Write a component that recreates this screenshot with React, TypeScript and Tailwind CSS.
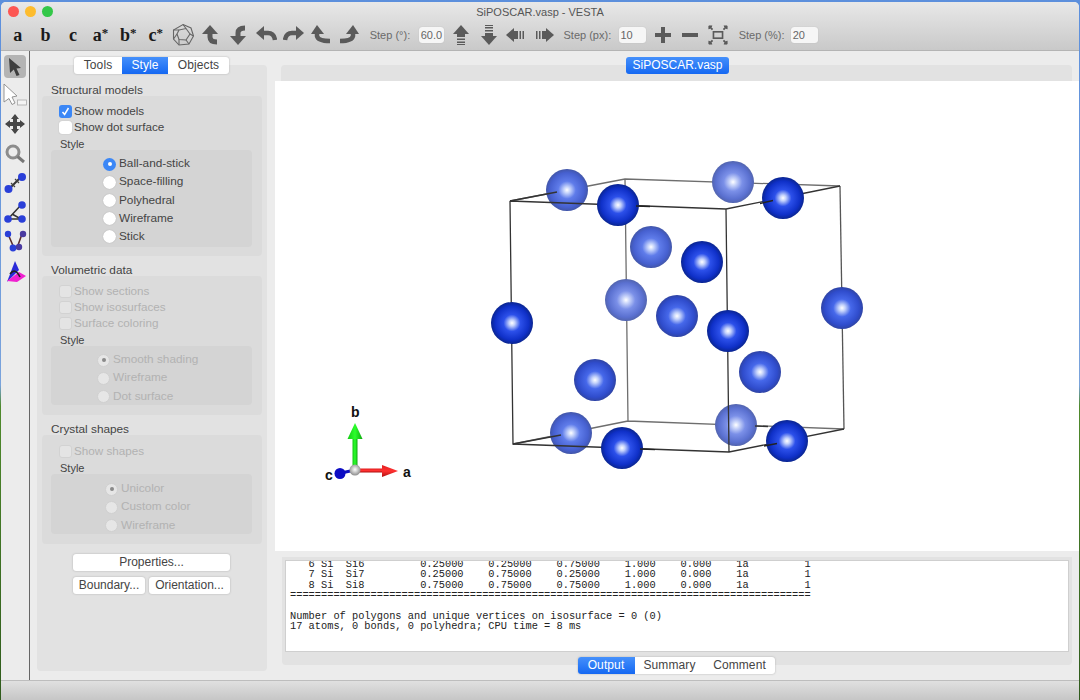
import React from 'react';

const uiFont = "font-['Liberation_Sans',Arial,sans-serif]";

// --- toolbar icons ---
const G = '#5a5a5a';

function CurveArrow({ flip = '' }: { flip?: string }) {
  return (
    <svg width="22" height="22" viewBox="0 0 22 22" className={flip}>
      <path d="M10 1 L18 10 L2 10 Z" fill={G} />
      <path d="M10 9 V13 Q10 18 17 18" fill="none" stroke={G} strokeWidth="5" />
    </svg>
  );
}

function SideArrow({ flip = '' }: { flip?: string }) {
  return (
    <svg width="22" height="22" viewBox="0 0 22 22" className={flip}>
      <path d="M1 9 L9 2 L9 16 Z" fill={G} />
      <path d="M8 9 H13 Q19 9 20 16" fill="none" stroke={G} strokeWidth="4.5" />
    </svg>
  );
}

function HookArrow({ flip = '' }: { flip?: string }) {
  return (
    <svg width="22" height="22" viewBox="0 0 22 22" className={flip}>
      <path d="M7 1 L14 10 L1 10 Z" fill={G} />
      <path d="M7 9 V12 Q8 17 20 17" fill="none" stroke={G} strokeWidth="4.5" />
    </svg>
  );
}

function Poly() {
  return (
    <svg width="24" height="24" viewBox="0 0 24 24" fill="none" stroke="#666" strokeWidth="1.1">
      <path d="M12 1.5 L20 5 L22.5 13 L18 21 L8 22 L2.5 16 L2.5 7 Z" />
      <path d="M8 7 L15 5.5 L19 11 L15 17 L8 16.5 L6 11 Z" />
      <path d="M8 7 L2.5 7 M15 5.5 L12 1.5 M19 11 L22.5 13 M15 17 L18 21 M8 16.5 L8 22 M6 11 L2.5 16" />
    </svg>
  );
}

function PushUp({ flip = '' }: { flip?: string }) {
  return (
    <svg width="20" height="22" viewBox="0 0 20 22" className={flip}>
      <path d="M10 1 L18 10 L2 10 Z" fill={G} />
      <path d="M6 10 H14 V13 H6 Z M6 14.5 H14 V16 H6 Z M6 17.5 H14 V19 H6 Z M6 20 H14 V21 H6 Z" fill={G} />
    </svg>
  );
}

function PushLeft({ flip = '' }: { flip?: string }) {
  return (
    <svg width="22" height="16" viewBox="0 0 22 16" className={flip}>
      <path d="M1 8 L9 1 L9 15 Z" fill={G} />
      <path d="M9 4 H13 V12 H9 Z M14.5 4 H16 V12 H14.5 Z M17.5 4 H19 V12 H17.5 Z" fill={G} />
    </svg>
  );
}

function Fit() {
  return (
    <svg width="20" height="20" viewBox="0 0 22 22" fill="none" stroke={G}>
      <rect x="6" y="7.5" width="10" height="7" strokeWidth="1.8" />
      <path d="M1.5 1.5 L5 5 M20.5 1.5 L17 5 M1.5 20.5 L5 17 M20.5 20.5 L17 17" strokeWidth="2" />
      <path d="M1 1 H4.5 L1 4.5 Z M21 1 H17.5 L21 4.5 Z M1 21 H4.5 L1 17.5 Z M21 21 H17.5 L21 17.5 Z" fill={G} strokeWidth="1" />
    </svg>
  );
}

function Letter({ t, sup }: { t: string; sup?: boolean }) {
  return (
    <span className="w-[27.6px] shrink-0 text-center font-['Liberation_Serif',serif] font-bold text-[18px] leading-none text-[#1a1a1a]">
      {t}
      {sup && <span className="text-[13px] relative top-[-4px]">*</span>}
    </span>
  );
}

function Cell({ children, w = 'w-[27.6px]' }: { children: React.ReactNode; w?: string }) {
  return <span className={`${w} shrink-0 flex items-center justify-center`}>{children}</span>;
}

function StepBox({ label, value, className, labelW, boxW }: { label: string; value: string; className: string; labelW: string; boxW: string }) {
  return (
    <div className={`flex items-center shrink-0 gap-[10px] ${className}`}>
      <span className={`${labelW} text-[11px] text-[#6a6a6a] whitespace-nowrap`}>{label}</span>
      <span className={`${boxW} h-[16px] bg-[#f6f6f6] rounded-[3px] shadow-[0_0_1px_#aaa] text-[11px] leading-[16px] text-[#666] px-[2px]`}>
        {value}
      </span>
    </div>
  );
}

// --- left tool strip ---
function ToolIcons() {
  const blue = '#2a3fd8';
  return (
    <div className="flex flex-col items-center">
      <span className="w-[22px] h-[23px] rounded-[4px] bg-[#b4b4b4] flex items-center justify-center mt-[4px]">
        <svg width="16" height="20" viewBox="0 0 16 20">
          <path d="M2 1 L14 11 L9.5 11.5 L12.5 18 L9.5 19 L6.8 12.6 L3 16 Z" fill="#3d3d3d" />
        </svg>
      </span>
      <svg width="24" height="24" viewBox="0 0 24 24" className="mt-[5px]">
        <path d="M1 1 L14 13 L9 14 L12 20 L9 21.5 L6 15.5 L1 19 Z" fill="#fff" stroke="#8a8a8a" strokeWidth="0.9" />
        <rect x="14.5" y="17" width="9" height="5" fill="#f4f4f4" stroke="#aaa" strokeWidth="0.8" />
      </svg>
      <svg width="22" height="22" viewBox="0 0 22 22" className="mt-[6px]">
        <path d="M11 1 L15 6 H13 V9 H16 V7 L21 11 L16 15 V13 H13 V16 H15 L11 21 L7 16 H9 V13 H6 V15 L1 11 L6 7 V9 H9 V6 H7 Z" fill="#474747" />
      </svg>
      <svg width="22" height="22" viewBox="0 0 22 22" className="mt-[8px]" fill="none">
        <circle cx="9" cy="9" r="6" stroke="#8c8c8c" strokeWidth="3" />
        <path d="M13.5 13.5 L20 19" stroke="#777" strokeWidth="3" />
      </svg>
      <svg width="24" height="24" viewBox="0 0 24 24" className="mt-[6px]">
        <path d="M7 17 L17 7" stroke="#333" strokeWidth="2" />
        <path d="M8 12 L12 16 M12 8 L16 12" stroke="#444" strokeWidth="1.2" />
        <circle cx="5.5" cy="18" r="4" fill={blue} />
        <circle cx="19" cy="6" r="4" fill={blue} />
      </svg>
      <svg width="24" height="24" viewBox="0 0 24 24" className="mt-[5px]" fill="none">
        <path d="M5 19 L18 5 M9 14 L18 19 H5" stroke="#333" strokeWidth="1.5" />
        <circle cx="5" cy="19" r="3.8" fill={blue} />
        <circle cx="19" cy="5" r="3.8" fill={blue} />
        <circle cx="19" cy="19" r="3.8" fill={blue} />
      </svg>
      <svg width="24" height="24" viewBox="0 0 24 24" className="mt-[5px]" fill="none">
        <path d="M5 5 L11 19 H14 L19 5" stroke="#5a2d2d" strokeWidth="1.6" />
        <circle cx="5" cy="5" r="3.2" fill={blue} />
        <circle cx="10" cy="19" r="3.4" fill={blue} />
        <circle cx="16" cy="18" r="3.2" fill="#4a3aa0" />
        <circle cx="20" cy="5" r="3.2" fill="#4a3aa0" />
      </svg>
      <svg width="24" height="24" viewBox="0 0 24 24" className="mt-[6px]" fill="none">
        <path d="M4 23 L12 2 L16 11 Z" fill="#2a2ad8" />
        <path d="M4 22 L16 13 L23 17 L14 23 Z" fill="#f020d0" />
        <path d="M7 15 Q12 8 17 18" stroke="#222" strokeWidth="1.6" />
      </svg>
    </div>
  );
}

// --- form bits ---
function Check({ label, checked, disabled }: { label: string; checked?: boolean; disabled?: boolean }) {
  return (
    <div className="h-[16px] flex items-center pl-[17px]">
      <span
        className={
          checked
            ? 'w-[13px] h-[13px] rounded-[3px] bg-[#3b87f6] flex items-center justify-center'
            : disabled
              ? 'w-[13px] h-[13px] rounded-[3px] bg-[#e4e4e4] border border-[#d2d2d2]'
              : 'w-[13px] h-[13px] rounded-[3px] bg-white shadow-[0_0_1px_#999]'
        }
      >
        {checked && (
          <svg width="11" height="11" viewBox="0 0 11 11" fill="none">
            <path d="M2.5 6 L4.6 8.5 L8.5 2" stroke="#fff" strokeWidth="1.5" />
          </svg>
        )}
      </span>
      <span className={`ml-[2px] text-[11.7px] ${disabled ? 'text-[#b2b2b2]' : 'text-[#444]'}`}>{label}</span>
    </div>
  );
}

function Radio({ label, on, disabled }: { label: string; on?: boolean; disabled?: boolean }) {
  let dot = 'w-[13px] h-[13px] rounded-full flex items-center justify-center ';
  if (disabled) dot += 'bg-[#e6e6e6] border border-[#d0d0d0]';
  else if (on) dot += 'bg-[#3b87f6]';
  else dot += 'bg-white shadow-[0_0_1px_#999]';
  return (
    <div className="h-[18.2px] flex items-center">
      <span className={dot}>{on && <span className={`w-[4px] h-[4px] rounded-full ${disabled ? 'bg-[#8a8a8a]' : 'bg-white'}`} />}</span>
      <span className={`ml-[3px] text-[11.8px] ${disabled ? 'text-[#b2b2b2]' : 'text-[#444]'}`}>{label}</span>
    </div>
  );
}

function Section({
  title,
  checks,
  radios,
  disabled,
  boxClass,
  innerClass,
}: {
  title: string;
  checks: { label: string; checked?: boolean }[];
  radios: { label: string; on?: boolean }[];
  disabled?: boolean;
  boxClass: string;
  innerClass: string;
}) {
  return (
    <div className="ml-[5px] w-[220px]">
      <div className="pl-[9px] h-[13px] text-[11.8px] leading-[14px] text-[#444]">{title}</div>
      <div className={`rounded-[4px] bg-[#dbdbdb] ${boxClass}`}>
        {checks.map((c) => (
          <Check key={c.label} label={c.label} checked={c.checked} disabled={disabled} />
        ))}
        <div className="mt-[3px] h-[12px] pl-[18px] text-[11px] leading-[12px] text-[#444]">Style</div>
        <div className={`ml-[9px] w-[201px] rounded-[4px] bg-[#d4d4d4] ${innerClass}`}>
          {radios.map((r) => (
            <Radio key={r.label} label={r.label} on={r.on} disabled={disabled} />
          ))}
        </div>
      </div>
    </div>
  );
}

function Segment({ items, active, widths }: { items: string[]; active: string; widths: string[] }) {
  return (
    <div className="flex h-[17px] rounded-[3px] bg-white shadow-[0_0_2px_#aaa] overflow-hidden">
      {items.map((it, i) => (
        <span
          key={it}
          className={`${widths[i]} text-center text-[12px] leading-[17px] tracking-[0.1px] ${
            it === active ? 'bg-[linear-gradient(#4590fb,#1568f2)] text-white' : 'text-[#444]'
          }`}
        >
          {it}
        </span>
      ))}
    </div>
  );
}

function Btn({ children, className }: { children: React.ReactNode; className: string }) {
  return (
    <span className={`block h-[17px] rounded-[3px] bg-white shadow-[0_0_2px_#aaa] text-center text-[12px] leading-[17px] text-[#444] ${className}`}>
      {children}
    </span>
  );
}

// --- structure view ---
// tone: 0 saturated, 1 light, 2 pale (further back)
const backAtoms: { x: number; y: number; t: number }[] = [
  { x: 733, y: 182, t: 2 },
  { x: 567, y: 190, t: 1 },
  { x: 651, y: 247, t: 1 },
  { x: 842, y: 308, t: 0 },
  { x: 626, y: 300, t: 2 },
  { x: 677, y: 316, t: 0 },
  { x: 595, y: 380, t: 0 },
  { x: 760, y: 372, t: 0 },
  { x: 571, y: 433, t: 1 },
  { x: 736, y: 425, t: 2 },
];

const frontAtoms = [
  { x: 618, y: 205 },
  { x: 783, y: 198 },
  { x: 702, y: 262 },
  { x: 512, y: 323 },
  { x: 728, y: 331 },
  { x: 622, y: 448 },
  { x: 787, y: 441 },
];

const toneFill = ['url(#sat)', 'url(#light)', 'url(#pale)'];

function Crystal() {
  return (
    <svg className="block w-full h-full" viewBox="275 81 804 470">
      <defs>
        <radialGradient id="front" cx="50%" cy="50%" r="50%">
          <stop offset="0%" stopColor="#ffffff" />
          <stop offset="14%" stopColor="#c4d2fc" />
          <stop offset="40%" stopColor="#2c50ea" />
          <stop offset="80%" stopColor="#0f30c8" />
          <stop offset="100%" stopColor="#0a2590" />
        </radialGradient>
        <radialGradient id="sat" cx="50%" cy="50%" r="50%">
          <stop offset="0%" stopColor="#ffffff" />
          <stop offset="15%" stopColor="#c6d4fb" />
          <stop offset="42%" stopColor="#4668ea" />
          <stop offset="82%" stopColor="#2f4ccc" />
          <stop offset="100%" stopColor="#2f44a4" />
        </radialGradient>
        <radialGradient id="light" cx="50%" cy="50%" r="50%">
          <stop offset="0%" stopColor="#ffffff" />
          <stop offset="15%" stopColor="#c6d4fb" />
          <stop offset="42%" stopColor="#5f7cea" />
          <stop offset="82%" stopColor="#4660d0" />
          <stop offset="100%" stopColor="#4256a8" />
        </radialGradient>
        <radialGradient id="pale" cx="50%" cy="50%" r="50%">
          <stop offset="0%" stopColor="#ffffff" />
          <stop offset="16%" stopColor="#cbd6fa" />
          <stop offset="44%" stopColor="#7b90e8" />
          <stop offset="82%" stopColor="#5a70d0" />
          <stop offset="100%" stopColor="#5264ae" />
        </radialGradient>
        <radialGradient id="knob" cx="50%" cy="45%" r="55%">
          <stop offset="0%" stopColor="#ffffff" />
          <stop offset="100%" stopColor="#8c8c8c" />
        </radialGradient>
        <linearGradient id="greenAxis" x1="0" x2="1" y1="0" y2="0">
          <stop offset="0%" stopColor="#14c814" />
          <stop offset="50%" stopColor="#2cff2c" />
          <stop offset="100%" stopColor="#0fa80f" />
        </linearGradient>
        <linearGradient id="redAxis" x1="0" x2="0" y1="0" y2="1">
          <stop offset="0%" stopColor="#e02020" />
          <stop offset="50%" stopColor="#ff3030" />
          <stop offset="100%" stopColor="#b01010" />
        </linearGradient>
      </defs>

      {/* cell edges behind the atoms */}
      <g stroke="#6e6e6e" strokeWidth="1.3" fill="none">
        <path d="M510 201 L625 179 L840 186 M625 179 L628 421 L844 429 M628 421 L513 444" />
        <path d="M840 186 L844 429" stroke="#555" />
      </g>
      {backAtoms.map((a) => (
        <circle key={`${a.x}-${a.y}`} cx={a.x} cy={a.y} r={21} fill={toneFill[a.t]} />
      ))}
      {/* edges in front of the paler atoms */}
      <g stroke="#333" strokeWidth="1.3" fill="none">
        <path d="M510 201 L726 209 L840 186 M844 429 L729 452 L513 444 L510 201 M726 209 L729 452" />
        <path d="M513 444 L561 435 M510 201 L557 192 M755 426 L768 426.5" />
      </g>
      {frontAtoms.map((a) => (
        <circle key={`${a.x}-${a.y}`} cx={a.x} cy={a.y} r={21} fill="url(#front)" />
      ))}
      <g stroke="#222" strokeWidth="1.3" fill="none">
        <path d="M760 203.5 L773 200.5 M764 446 L777 443.5 M640 449 L655 449.6 M636 206 L650 206.5" />
      </g>

      {/* axes */}
      <rect x="352.5" y="437" width="5" height="33" fill="url(#greenAxis)" />
      <path d="M355 423 L347.5 439 L362.5 439 Z" fill="url(#greenAxis)" />
      <rect x="355" y="468.5" width="28" height="4" fill="url(#redAxis)" />
      <path d="M398 471 L382 465 L382 477 Z" fill="url(#redAxis)" />
      <path d="M355 470 L341 473" stroke="#1010c0" strokeWidth="3" />
      <circle cx="340" cy="473.5" r="5.5" fill="#0c0cc4" />
      <circle cx="355" cy="470" r="5.5" fill="url(#knob)" />
      <g className="font-['Liberation_Sans',sans-serif]" fontWeight="700" fontSize="14" fill="#111">
        <text x="351" y="417">b</text>
        <text x="403" y="477">a</text>
        <text x="325" y="480">c</text>
      </g>
    </svg>
  );
}

const outputText = `   6 Si  Si6         0.25000    0.25000    0.75000    1.000    0.000    1a         1
   7 Si  Si7         0.25000    0.75000    0.25000    1.000    0.000    1a         1
   8 Si  Si8         0.75000    0.75000    0.75000    1.000    0.000    1a         1
====================================================================================

Number of polygons and unique vertices on isosurface = 0 (0)
17 atoms, 0 bonds, 0 polyhedra; CPU time = 8 ms`;

export default function App() {
  return (
    <div className={`${uiFont} w-[1080px] h-[700px] overflow-hidden px-[1px] pt-[2px] bg-[linear-gradient(#5c8fdc_0%,#7aa3dc_55%,#4f8a2c_58%,#2f5a1c_100%)]`}>
      <div className="h-[698px] flex flex-col rounded-t-[5px] overflow-hidden bg-[#ececec]">
        {/* title + toolbar */}
        <div className="h-[49px] shrink-0 bg-[linear-gradient(#e8e8e8,#c9c9c9)] border-b border-[#b4b4b4]">
          <div className="h-[18px] grid grid-cols-[1fr_auto_1fr] items-center px-[7px]">
            <div className="flex gap-[6px]">
              <span className="w-[11px] h-[11px] rounded-full bg-[#fc5753]" />
              <span className="w-[11px] h-[11px] rounded-full bg-[#fdbc2e]" />
              <span className="w-[11px] h-[11px] rounded-full bg-[#33c748]" />
            </div>
            <div className="text-[11px] text-[#555] mt-[2px]">SiPOSCAR.vasp - VESTA</div>
            <div />
          </div>
          <div className="flex items-center h-[30px] pl-[3px]">
            <Letter t="a" />
            <Letter t="b" />
            <Letter t="c" />
            <Letter t="a" sup />
            <Letter t="b" sup />
            <Letter t="c" sup />
            <Cell><Poly /></Cell>
            <Cell><CurveArrow /></Cell>
            <Cell><CurveArrow flip="-scale-y-100" /></Cell>
            <Cell><SideArrow /></Cell>
            <Cell><SideArrow flip="-scale-x-100" /></Cell>
            <Cell><HookArrow /></Cell>
            <Cell><HookArrow flip="-scale-x-100" /></Cell>
            <StepBox label="Step (°):" value="60.0" className="ml-[7px]" labelW="w-[39px]" boxW="w-[25px]" />
            <Cell w="w-[28px] ml-[3px]"><PushUp /></Cell>
            <Cell><PushUp flip="-scale-y-100" /></Cell>
            <Cell><PushLeft /></Cell>
            <Cell><PushLeft flip="-scale-x-100" /></Cell>
            <StepBox label="Step (px):" value="10" className="ml-[6px]" labelW="w-[45px]" boxW="w-[27px]" />
            <Cell w="w-[28px] ml-[3px]">
              <svg width="16" height="16" viewBox="0 0 16 16"><path d="M6 0 H10 V6 H16 V10 H10 V16 H6 V10 H0 V6 H6 Z" fill={G} /></svg>
            </Cell>
            <Cell>
              <svg width="16" height="4" viewBox="0 0 16 4"><rect width="16" height="4" fill={G} /></svg>
            </Cell>
            <Cell><Fit /></Cell>
            <StepBox label="Step (%):" value="20" className="ml-[7px]" labelW="w-[42px]" boxW="w-[27px]" />
          </div>
        </div>

        <div className="flex h-[629px] shrink-0">
          {/* tool strip */}
          <div className="w-[29px] shrink-0 border-r border-[#666]">
            <ToolIcons />
          </div>

          {/* left panel */}
          <div className="w-[245px] shrink-0 pt-[6px] pl-[7px]">
            <div className="relative z-10 flex justify-center w-[229px]">
              <Segment items={['Tools', 'Style', 'Objects']} active="Style" widths={['w-[48px]', 'w-[46px]', 'w-[61px]']} />
            </div>
            <div className="-mt-[9px] w-[230px] h-[606px] rounded-[4px] bg-[#e2e2e2] pt-[18px]">
              <Section
                title="Structural models"
                boxClass="h-[160px] pt-[7px]"
                innerClass="h-[97px] pt-[5px] pl-[52px]"
                checks={[{ label: 'Show models', checked: true }, { label: 'Show dot surface' }]}
                radios={[{ label: 'Ball-and-stick', on: true }, { label: 'Space-filling' }, { label: 'Polyhedral' }, { label: 'Wireframe' }, { label: 'Stick' }]}
              />
              <div className="h-[7px]" />
              <Section
                disabled
                title="Volumetric data"
                boxClass="h-[139px] pt-[7px]"
                innerClass="h-[59px] pt-[5px] pl-[46px]"
                checks={[{ label: 'Show sections' }, { label: 'Show isosurfaces' }, { label: 'Surface coloring' }]}
                radios={[{ label: 'Smooth shading', on: true }, { label: 'Wireframe' }, { label: 'Dot surface' }]}
              />
              <div className="h-[7px]" />
              <Section
                disabled
                title="Crystal shapes"
                boxClass="h-[109px] pt-[8px]"
                innerClass="h-[60px] pt-[6px] pl-[54px]"
                checks={[{ label: 'Show shapes' }]}
                radios={[{ label: 'Unicolor', on: true }, { label: 'Custom color' }, { label: 'Wireframe' }]}
              />
              <div className="mt-[10px] ml-[36px] w-[157px]">
                <Btn className="w-full">Properties...</Btn>
                <div className="flex justify-between mt-[6px]">
                  <Btn className="w-[72px]">Boundary...</Btn>
                  <Btn className="w-[81px]">Orientation...</Btn>
                </div>
              </div>
            </div>
          </div>

          {/* viewer */}
          <div className="flex-1 min-w-0">
            <div className="mt-[14px] ml-[6px] mr-[7px] h-[16px] rounded-t-[4px] bg-[#e2e2e2] flex justify-center pl-[2px]">
              <span className="-mt-[8px] h-[17px] w-[103px] rounded-[3px] bg-[linear-gradient(#4590fb,#1568f2)] text-center text-white text-[12px] leading-[17px]">
                SiPOSCAR.vasp
              </span>
            </div>
            <div className="h-[470px] bg-white">
              <Crystal />
            </div>
            <div className="mt-[6px] ml-[7px] w-[790px] h-[108px] rounded-b-[4px] bg-[#e2e2e2] pt-[3px]">
              <div className="mx-[3px] h-[92px] bg-white border border-[#cfcfcf] overflow-hidden">
                <pre className="-mt-[2px] ml-[4px] font-['Liberation_Mono',monospace] text-[10.33px] leading-[10.4px] text-[#222]">{outputText}</pre>
              </div>
              <div className="mt-[5px] flex justify-center pr-[2px]">
                <Segment items={['Output', 'Summary', 'Comment']} active="Output" widths={['w-[57px]', 'w-[70px]', 'w-[70px]']} />
              </div>
            </div>
          </div>
        </div>

        {/* status bar */}
        <div className="flex-1 bg-[linear-gradient(#e0e0e0,#c6c6c6)] border-t border-[#bdbdbd]" />
      </div>
    </div>
  );
}
